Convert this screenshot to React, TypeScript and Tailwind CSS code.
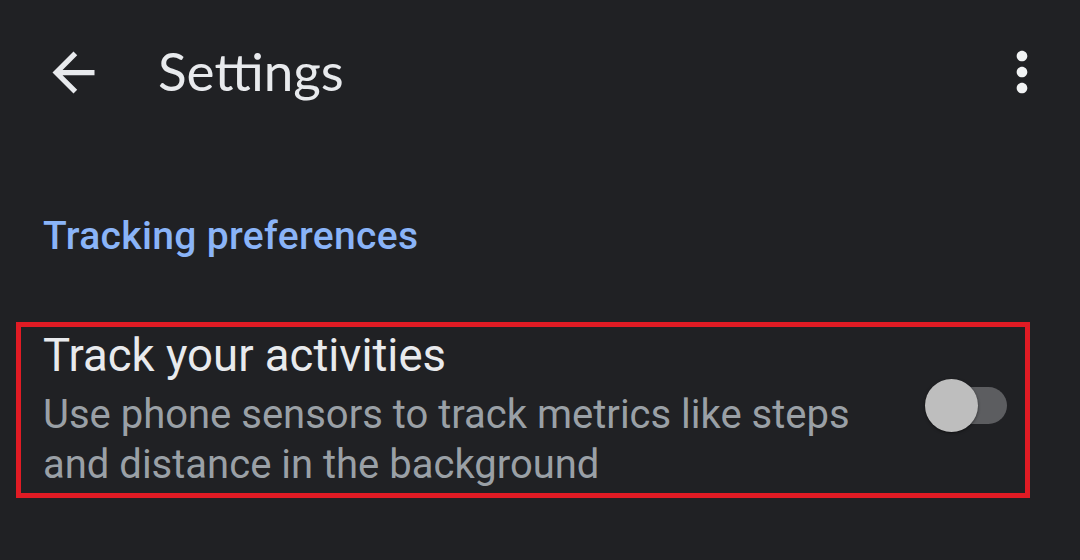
export default function App() {
  return (
    <div className="w-[1080px] h-[560px] bg-[#202124] overflow-hidden font-['Roboto',sans-serif]">
      <div className="flex items-center h-[144px]">
        <svg viewBox="0 0 24 24" className="w-[63px] h-[63px] ml-[42px] fill-[#e8eaed]">
          <path d="M20 11H7.83l5.59-5.59L12 4l-8 8 8 8 1.41-1.41L7.83 13H20v-2z" />
        </svg>
        <div className="ml-[53px] -mt-[2px] font-['Lato',sans-serif] text-[53px] leading-[64px] text-[#e8eaed]">Settings</div>
        <svg viewBox="0 0 24 24" className="w-[64px] h-[64px] ml-auto mr-[26px] fill-[#f1f3f4]">
          <path d="M12 8c1.1 0 2-.9 2-2s-.9-2-2-2-2 .9-2 2 .9 2 2 2zm0 2c-1.1 0-2 .9-2 2s.9 2 2 2 2-.9 2-2-.9-2-2-2zm0 6c-1.1 0-2 .9-2 2s.9 2 2 2 2-.9 2-2-.9-2-2-2z" />
        </svg>
      </div>

      <div className="mt-[70px] pl-[43px] text-[39px] leading-[44px] tracking-[0.35px] font-medium text-[#8ab4f8]">
        Tracking preferences
      </div>

      <div className="mt-[64px] ml-[16px] w-[1014px] h-[176px] border-[5px] border-[#e01b24] flex items-center pl-[22px] pr-[18px]">
        <div className="flex-1">
          <div className="text-[45.5px] leading-[52px] text-[#e8eaed]">Track your activities</div>
          <div className="mt-[8px] w-[850px] text-[40px] leading-[50px] text-[#9aa0a6]">
            Use phone sensors to track metrics like steps and distance in the background
          </div>
        </div>
        <div className="relative w-[82px] h-[53px] mb-[10px] shrink-0">
          <div className="absolute left-[7px] right-0 top-[8px] h-[37px] rounded-full bg-[#5c5d60]" />
          <div className="absolute left-0 top-0 w-[53px] h-[53px] rounded-full bg-[#bebebe] shadow-[0_1px_3px_rgba(0,0,0,0.5)]" />
        </div>
      </div>
    </div>
  );
}
